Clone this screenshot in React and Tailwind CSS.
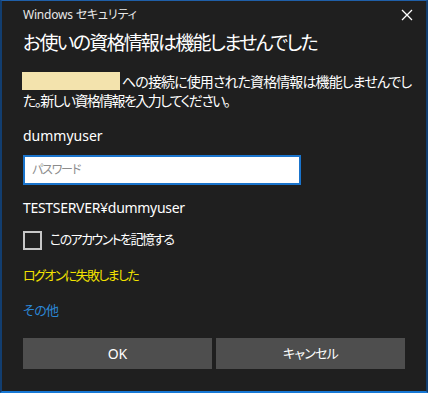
const FONT = {
  fontFamily:
    '"Noto Sans", "Noto Sans CJK JP", sans-serif',
};

export default function App() {
  return (
    <div
      style={FONT}
      className="flex h-[393px] w-[428px] flex-col border-t border-r-2 border-b-2 border-l-2 border-t-[#1f5fa8] border-r-[#123e70] border-b-[#1778d4] border-l-[#123e70] bg-[#1f1f1f] pl-[21px] text-white [font-feature-settings:'palt']"
    >
      <div className="flex h-[28px] items-center justify-between pr-[13px]">
        <span className="text-[12px] tracking-[-0.2px] text-[#e8e8e8]">
          Windows セキュリティ
        </span>
        <svg width="12" height="12" viewBox="0 0 12 12" className="text-white">
          <path d="M1 1L11 11M11 1L1 11" stroke="currentColor" strokeWidth="1.3" />
        </svg>
      </div>

      <div className="flex h-[28px] items-center">
        <h1 className="text-[19px] tracking-[-1.8px]">
          お使いの資格情報は機能しませんでした
        </h1>
      </div>

      <p className="mt-[15px] whitespace-nowrap text-[14px] leading-[19px] tracking-[-0.9px]">
        <span className="mr-[2px] ml-[-1px] inline-block h-[18px] w-[98px] bg-[#f3e3ad] align-top" />
        への接続に使用された資格情報は機能しませんでし
        <br />
        <span className="tracking-[-1.6px]">た。新しい資格情報を入力してください。</span>
      </p>

      <div className="mt-[15px] flex h-[20px] items-center text-[14px]">dummyuser</div>

      <div className="mt-[10px] flex h-[30px] w-[278px] items-center border-2 border-[#1a74cc] bg-white px-[7px]">
        <span className="text-[12px] tracking-[-1.2px] text-[#8c8c8c]">パスワード</span>
      </div>

      <div className="mt-[12px] flex h-[20px] items-center text-[14px] tracking-[-0.3px]">
        TESTSERVER¥dummyuser
      </div>

      <div className="mt-[13px] flex h-[20px] items-center gap-[8px]">
        <div className="h-[19px] w-[19px] border-2 border-[#c6c6c6]" />
        <span className="text-[13px] tracking-[-1.6px]">このアカウントを記憶する</span>
      </div>

      <div className="mt-[16px] flex h-[20px] items-center text-[13px] tracking-[-1.6px] text-[#f2e200]">
        ログオンに失敗しました
      </div>

      <div className="mt-[15px] flex h-[20px] items-center text-[13px] tracking-[-0.6px] text-[#2c87d6]">
        その他
      </div>

      <div className="mt-[17px] flex gap-[4px]">
        <button className="flex h-[31px] w-[189px] items-center justify-center bg-[#4e4e4e] text-[14px]">
          OK
        </button>
        <button className="flex h-[31px] w-[189px] items-center justify-center bg-[#4e4e4e] text-[13px] tracking-[-0.8px]">
          キャンセル
        </button>
      </div>
    </div>
  );
}
